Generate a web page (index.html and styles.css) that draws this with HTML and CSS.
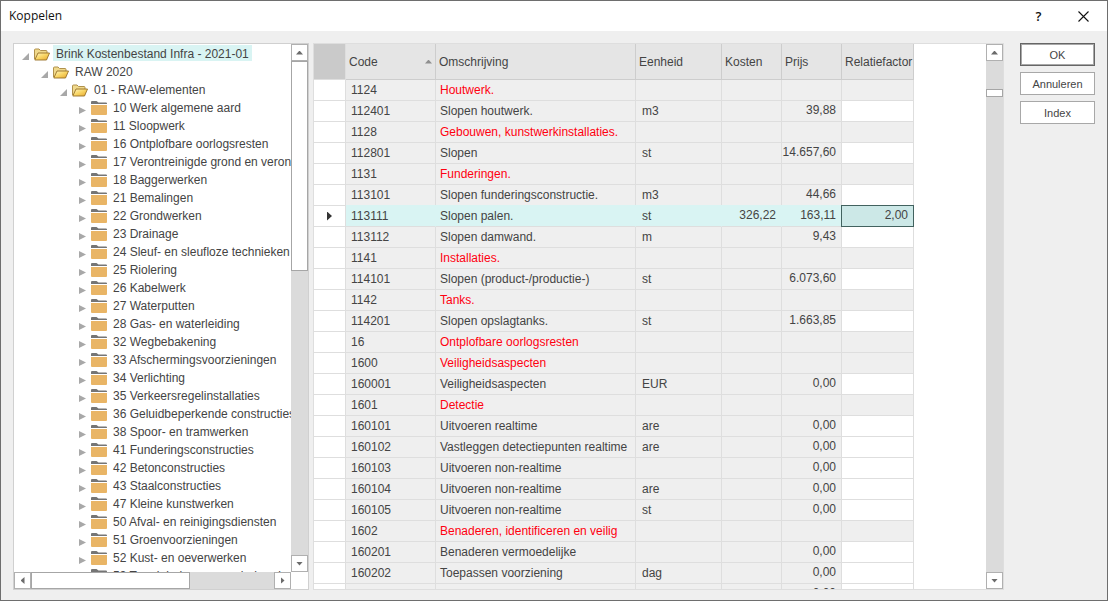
FILE: index.html
```html
<!DOCTYPE html>
<html lang="nl">
<head>
<meta charset="utf-8">
<title>Koppelen</title>
<link rel="stylesheet" href="styles.css">
</head>
<body>
<svg class="defs" aria-hidden="true">
  <defs>
    <linearGradient id="gold" x1="0" y1="0" x2="1" y2="1">
      <stop offset="0" stop-color="#fff6c4"/><stop offset=".5" stop-color="#f9d665"/><stop offset="1" stop-color="#e5a52c"/>
    </linearGradient>
    <symbol id="open" viewBox="0 0 16 14">
      <path d="M.5 12V3q0-1 1-1H5L6.500 3.500H12q1 0 1 1V6" fill="#f0d98c" stroke="#b0914c"/>
      <path d="M.8 13 4 6H15.500L12.500 13z" fill="url(#gold)" stroke="#967027" stroke-width=".9"/>
    </symbol>
    <symbol id="closed" viewBox="0 0 16 14">
      <path d="M0 3V1Q0 0 1 0H5.500L7.500 1.500H15Q16 1.500 16 2.500V3z" fill="#757575"/>
      <path d="M0 4H16V13Q16 14 15 14H1Q0 14 0 13z" fill="#e9b566"/>
    </symbol>
  </defs>
</svg>
<div class="window">
  <header class="titlebar">
    <h1 class="title">Koppelen</h1>
    <button class="caption help" aria-label="Help">?</button>
    <button class="caption" aria-label="Sluiten"><svg width="11" height="11" viewBox="0 0 11 11"><path d="M.5.5l10 10M10.500.5l-10 10" stroke="#111" stroke-width="1.100" fill="none"/></svg></button>
  </header>
  <main class="content">
    <section class="tree-panel" aria-label="Kostenbestand">
      <div class="tree" id="tree"></div>
      <div class="scroll vertical">
        <button class="step" aria-label="Omhoog"><i class="up"></i></button>
        <div class="thumb tree-thumb-v"></div>
        <button class="step last" aria-label="Omlaag"><i class="down"></i></button>
      </div>
      <div class="scroll horizontal">
        <button class="step" aria-label="Links"><i class="left"></i></button>
        <div class="thumb tree-thumb-h"></div>
        <button class="step last" aria-label="Rechts"><i class="right"></i></button>
      </div>
    </section>
    <section class="grid-panel" aria-label="Elementen">
      <div class="grid-view">
        <table class="grid">
          <colgroup><col class="c-mark"><col class="c-code"><col class="c-desc"><col class="c-unit"><col class="c-num"><col class="c-num"><col class="c-rel"></colgroup>
          <thead><tr><th class="corner"></th><th><span class="sorted">Code<i class="sort"></i></span></th><th>Omschrijving</th><th>Eenheid</th><th>Kosten</th><th>Prijs</th><th>Relatiefactor</th></tr></thead>
          <tbody id="rows"></tbody>
        </table>
      </div>
      <div class="scroll vertical">
        <button class="step" aria-label="Omhoog"><i class="up"></i></button>
        <div class="thumb grid-thumb"></div>
        <button class="step last" aria-label="Omlaag"><i class="down"></i></button>
      </div>
    </section>
    <aside class="actions">
      <button class="action default">OK</button>
      <button class="action">Annuleren</button>
      <button class="action">Index</button>
    </aside>
  </main>
</div>
<script src="app.js"></script>
</body>
</html>
```
FILE: styles.css
```css
* { box-sizing: border-box; }
body { margin: 0; font-family: "Liberation Sans", Arial, sans-serif; font-size: 12px; color: #444; }
button { font: inherit; color: inherit; margin: 0; padding: 0; }
.defs { position: absolute; width: 0; height: 0; }

.window { display: flex; flex-direction: column; height: 100vh; border: 1px solid #6e6e6e; background: #efefef; }
.titlebar { display: flex; align-items: center; flex: none; height: 30px; padding: 0 1px 0 8px; background: #fff; color: #111; }
.title { flex: 1; margin: 0; font: 400 12px/30px "Open Sans", "Noto Sans", sans-serif; }
.caption { display: flex; align-items: center; justify-content: center; width: 45px; height: 30px; border: 0; background: none; }
.help { font: 600 13px/30px "Open Sans", "Noto Sans", sans-serif; }

.content { display: flex; flex: 1; min-height: 0; padding: 12px 12px 10px; }
.tree-panel { display: grid; grid-template: minmax(0, 1fr) 17px / minmax(0, 1fr) 17px; flex: 0 0 296px; margin-right: 4px; border: 1px solid #d0d0d0; background: #fff; }
.tree { overflow: hidden; padding-top: 1px; white-space: nowrap; }
.tree ul { margin: 0; padding: 0; list-style: none; }
.tree ul ul { padding-left: 19px; }
.row { display: flex; align-items: center; height: 18px; padding-left: 8px; }
.toggle { display: flex; flex: none; width: 12px; height: 18px; padding-top: 8px; border: 0; background: none; }
.toggle::before { content: ""; width: 7px; height: 7px; background: #a8a8a8; clip-path: polygon(100% 0, 100% 100%, 0 100%); }
.toggle.shut::before { clip-path: polygon(0 0, 100% 50%, 0 100%); }
.folder { flex: none; width: 16px; height: 14px; }
.label { height: 16px; margin: 0 0 2px 3px; padding: 0 3px; line-height: 18px; }
.label.selected { background: #d9f4f3; }

.scroll { display: flex; background: #dbdbdb; }
.vertical { flex-direction: column; width: 17px; }
.horizontal { height: 17px; }
.step { display: flex; flex: none; align-items: center; justify-content: center; width: 17px; height: 17px; border: 1px solid #b0b0b0; background: #fff; }
.last { margin-top: auto; }
.horizontal .last { margin: 0 0 0 auto; }
.step i { width: 7px; height: 4px; background: #6b6b6b; }
.up, .sort { clip-path: polygon(50% 0, 100% 100%, 0 100%); }
.down { clip-path: polygon(0 0, 100% 0, 50% 100%); }
.step .left, .step .right { width: 4px; height: 7px; }
.left { clip-path: polygon(100% 0, 100% 100%, 0 50%); }
.right { clip-path: polygon(0 0, 100% 50%, 0 100%); }
.thumb { border: 1px solid #a6a6a6; background: #fff; }
.tree-thumb-v { height: 210px; }
.tree-thumb-h { width: 159px; }
.grid-thumb { height: 8px; margin-top: 28px; }

.grid-panel { display: flex; flex: 1; min-width: 0; border: 1px solid #dedede; background: #fff; }
.grid-view { flex: 1; min-width: 0; overflow: hidden; }
.grid { width: 600px; table-layout: fixed; border-spacing: 0; }
.c-mark { width: 32px; }
.c-code { width: 90px; }
.c-desc { width: 200px; }
.c-unit { width: 86px; }
.c-num { width: 60px; }
.c-rel { width: 72px; }
.grid th { height: 36px; padding: 0 0 0 3px; border-right: 1px solid #cdcdcd; border-bottom: 1px solid #cdcdcd; background: #e5e5e5; font-weight: 400; text-align: left; white-space: nowrap; overflow: hidden; }
.grid .corner { border-color: #dedede; background: #cacaca; }
.sorted { display: flex; align-items: center; justify-content: space-between; padding-right: 3px; }
.sort { width: 7px; height: 4px; background: #8f8f8f; }
.grid td { height: 21px; padding: 0 0 0 5px; border-right: 1px solid #dedede; border-bottom: 1px solid #dedede; background: #efefef; line-height: 20px; white-space: nowrap; }
.grid .desc { padding-left: 4px; }
.grid .unit { padding-left: 6px; }
.grid .num { padding: 0 5px 2px 0; line-height: 18px; text-align: right; }
.grid .mark, .grid .editable { background: #fff; }
.grid .mark { padding: 0 0 0 13px; }
.pointer { display: block; width: 5px; height: 9px; background: #333; clip-path: polygon(0 0, 100% 50%, 0 100%); }
.group .desc { color: #ff0010; }
.current td:not(.mark) { border-right-color: #d9f4f3; background: #d9f4f3; box-shadow: 0 -1px 0 #d9f4f3; }
.current .editable:not(.mark) { border-color: #42625f; background: #cce8e7; box-shadow: -1px 0 0 #42625f, 0 -1px 0 #42625f, -1px -1px 0 #42625f; }

.actions { display: flex; flex-direction: column; gap: 6px; flex: 0 0 75px; margin-left: 16px; }
.action { height: 23px; border: 1px solid #a8a8a8; background: #fff; font-size: 11px; }
.action.default { border-color: #666; box-shadow: inset 0 0 0 1px #a8a8a8; }
```
FILE: app.js
```js
const folders = ["10 Werk algemene aard", "11 Sloopwerk", "16 Ontplofbare oorlogsresten", "17 Verontreinigde grond en veront", "18 Baggerwerken", "21 Bemalingen", "22 Grondwerken", "23 Drainage", "24 Sleuf- en sleufloze technieken", "25 Riolering", "26 Kabelwerk", "27 Waterputten", "28 Gas- en waterleiding", "32 Wegbebakening", "33 Afschermingsvoorzieningen", "34 Verlichting", "35 Verkeersregelinstallaties", "36 Geluidbeperkende constructies", "38 Spoor- en tramwerken", "41 Funderingsconstructies", "42 Betonconstructies", "43 Staalconstructies", "47 Kleine kunstwerken", "50 Afval- en reinigingsdiensten", "51 Groenvoorzieningen", "52 Kust- en oeverwerken", "53 Terreinbeheer en onderhoud"];
const node = (name, icon, cls, kids) => `<li><div class="row"><button class="toggle ${icon === "closed" ? "shut" : ""}" aria-label="${name}"></button><svg class="folder"><use href="#${icon}"/></svg><span class="label ${cls}">${name}</span></div>${kids ? `<ul>${kids}</ul>` : ""}</li>`;
const leaves = folders.map(f => node(f, "closed", "", "")).join("");
document.getElementById("tree").innerHTML = `<ul>${node("Brink Kostenbestand Infra - 2021-01", "open", "selected", node("RAW 2020", "open", "", node("01 - RAW-elementen", "open", "", leaves)))}</ul>`;

const rows = [
  ["1124", "Houtwerk."],
  ["112401", "Slopen houtwerk.", "m3", "39,88"],
  ["1128", "Gebouwen, kunstwerkinstallaties."],
  ["112801", "Slopen", "st", "14.657,60"],
  ["1131", "Funderingen."],
  ["113101", "Slopen funderingsconstructie.", "m3", "44,66"],
  ["113111", "Slopen palen.", "st", "163,11", "326,22", "2,00"],
  ["113112", "Slopen damwand.", "m", "9,43"],
  ["1141", "Installaties."],
  ["114101", "Slopen (product-/productie-)", "st", "6.073,60"],
  ["1142", "Tanks."],
  ["114201", "Slopen opslagtanks.", "st", "1.663,85"],
  ["16", "Ontplofbare oorlogsresten"],
  ["1600", "Veiligheidsaspecten"],
  ["160001", "Veiligheidsaspecten", "EUR", "0,00"],
  ["1601", "Detectie"],
  ["160101", "Uitvoeren realtime", "are", "0,00"],
  ["160102", "Vastleggen detectiepunten realtime", "are", "0,00"],
  ["160103", "Uitvoeren non-realtime", "", "0,00"],
  ["160104", "Uitvoeren non-realtime", "are", "0,00"],
  ["160105", "Uitvoeren non-realtime", "st", "0,00"],
  ["1602", "Benaderen, identificeren en veilig"],
  ["160201", "Benaderen vermoedelijke", "", "0,00"],
  ["160202", "Toepassen voorziening", "dag", "0,00"],
  ["160203", "", "", "0,00"]
];
document.getElementById("rows").innerHTML = rows.map(([code, desc, unit = "", price = "", cost = "", rel = ""]) => {
  const cls = rel ? "current" : price ? "" : "group";
  return `<tr class="${cls}"><td class="mark">${rel ? '<i class="pointer"></i>' : ""}</td><td>${code}</td><td class="desc">${desc}</td><td class="unit">${unit}</td><td class="num">${cost}</td><td class="num">${price}</td><td class="num ${price ? "editable" : ""}">${rel}</td></tr>`;
}).join("");
```
